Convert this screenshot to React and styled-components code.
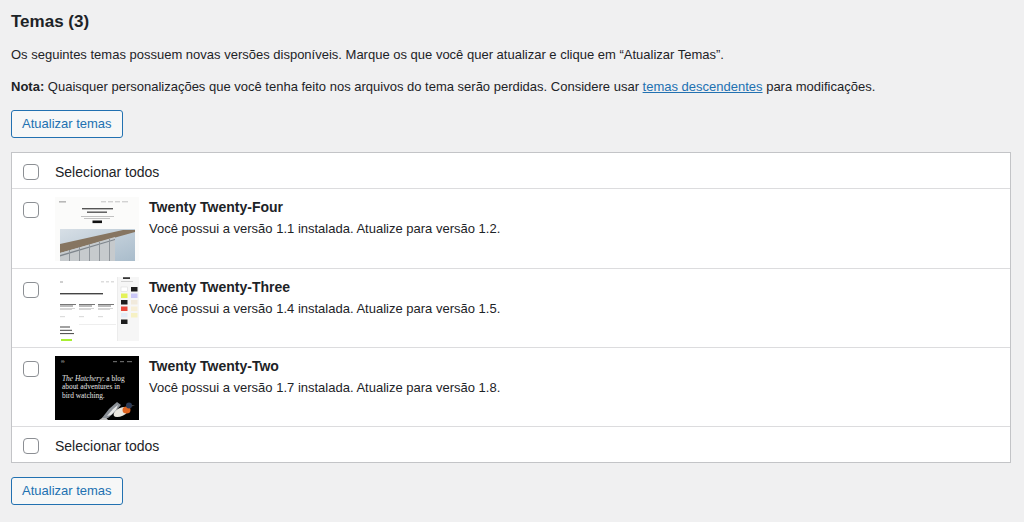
import React from 'react';
import styled, { createGlobalStyle } from 'styled-components';

const GlobalStyle = createGlobalStyle`
	body {
		margin: 0;
		background: #f0f0f1;
		color: #1d2327;
		font-family: "Liberation Sans", Arial, sans-serif;
		font-size: 13px;
	}
`;

const Page = styled.div`
	padding: 11px 13px 14px 11px;
`;

const Title = styled.h2`
	margin: 0 0 1px;
	font-size: 17px;
	line-height: 22px;
	font-weight: 700;
`;

const Text = styled.p`
	margin: 12px 0 0;
	line-height: 20px;
	& a {
		color: #2271b1;
		text-decoration: underline;
	}
`;

const Button = styled.button`
	display: block;
	margin-top: ${(props) => props.mt || 13}px;
	height: 28px;
	padding: 0 10px;
	border: 1px solid #2271b1;
	border-radius: 3px;
	background: #f6f7f7;
	color: #2271b1;
	font-family: inherit;
	font-size: 13px;
	line-height: 26px;
	cursor: pointer;
`;

const Table = styled.div`
	margin-top: 14px;
	background: #fff;
	border: 1px solid #c3c4c7;
`;

const SelectRow = styled.label`
	display: flex;
	align-items: center;
	box-sizing: border-box;
	height: 36px;
	padding: 3px 0 0 11px;
	font-size: 14px;
	border-top: ${(props) => (props.bordered ? '1px solid #dcdcde' : 'none')};
	border-bottom: ${(props) => (props.head ? '1px solid #dcdcde' : 'none')};
`;

const ThemeRow = styled.div`
	display: flex;
	align-items: flex-start;
	box-sizing: border-box;
	height: 79px;
	padding: 8px 0 6px 11px;
	& + & {
		border-top: 1px solid #dcdcde;
	}
`;

const Check = styled.input.attrs({ type: 'checkbox' })`
	appearance: none;
	flex-shrink: 0;
	width: 16px;
	height: 16px;
	margin: ${(props) => (props.top ? '5px' : '0')} 16px 0 0;
	border: 1px solid #8c8f94;
	border-radius: 4px;
	background: #fff;
`;

const Thumb = styled.svg`
	display: block;
	flex-shrink: 0;
	width: 84px;
	height: 64px;
	margin-right: 10px;
`;

const Info = styled.div`
	display: flex;
	flex-direction: column;
`;

const Name = styled.strong`
	font-size: 14px;
	line-height: 20px;
	font-weight: 700;
`;

const Desc = styled.span`
	margin-top: 2px;
	line-height: 20px;
`;

const ThumbFour = () => (
	<Thumb viewBox="0 0 84 64">
		<defs>
			<linearGradient id="sky" x1="0" y1="0" x2="1" y2="1">
				<stop offset="0" stopColor="#d7dfe6" />
				<stop offset="1" stopColor="#a9bccb" />
			</linearGradient>
		</defs>
		<rect width="84" height="64" fill="#fbfbfa" />
		<rect x="4" y="4.5" width="7" height="0.8" fill="#777" />
		<rect x="46" y="4.5" width="5" height="0.7" fill="#aaa" />
		<rect x="53" y="4.5" width="5" height="0.7" fill="#aaa" />
		<rect x="60" y="4.5" width="5" height="0.7" fill="#aaa" />
		<rect x="67" y="4.5" width="6" height="0.7" fill="#aaa" />
		<rect x="27" y="11" width="31" height="1.4" fill="#555" />
		<rect x="32" y="14.5" width="20" height="1.4" fill="#555" />
		<rect x="26" y="19" width="33" height="0.7" fill="#aaa" />
		<rect x="29" y="21" width="26" height="0.7" fill="#aaa" />
		<rect x="37.5" y="23.5" width="9.5" height="2.6" fill="#111" />
		<rect x="5" y="32" width="75" height="32" fill="url(#sky)" />
		<polygon points="5,47 68,33 80,33 80,35 5,56" fill="#867561" />
		<polygon points="5,56 60,40 60,64 5,64" fill="#c6cacd" />
		<polygon points="5,58 60,42 60,43 5,59.5" fill="#7e858c" />
		<rect x="14" y="53" width="1" height="11" fill="#8f959b" />
		<rect x="24" y="50" width="1" height="14" fill="#8f959b" />
		<rect x="34" y="47" width="1" height="17" fill="#8f959b" />
		<rect x="44" y="45" width="1" height="19" fill="#8f959b" />
		<rect x="54" y="42" width="1" height="22" fill="#8f959b" />
	</Thumb>
);

const swatches = [
	['#ffffff', '#1d1d1d'],
	['#e4f25a', '#cbc8f7'],
	['#1d1d1d', '#f1eadc'],
	['#e8473a', '#f7efd8'],
	['#e3ecf7', '#f6f1c4'],
	['#1d1d1d', null],
];

const ThumbThree = () => (
	<Thumb viewBox="0 0 84 64">
		<rect width="84" height="64" fill="#ffffff" />
		<rect x="5" y="4.6" width="3" height="0.8" fill="#888" />
		<rect x="46" y="4.6" width="3" height="0.6" fill="#aaa" />
		<rect x="51" y="4.6" width="3" height="0.6" fill="#aaa" />
		<rect x="56" y="4.6" width="3" height="0.6" fill="#aaa" />
		<rect x="5" y="16" width="43" height="1.4" fill="#444" />
		{[5, 24, 43].map((x) => (
			<g key={x}>
				<rect x={x} y="27" width="16" height="0.8" fill="#555" />
				<rect x={x} y="28.6" width="13" height="0.8" fill="#555" />
				<rect x={x} y="31" width="15" height="0.6" fill="#bbb" />
				<rect x={x} y="32.4" width="12" height="0.6" fill="#bbb" />
				<rect x={x} y="39.5" width="5" height="0.6" fill="#bbb" />
			</g>
		))}
		<rect x="24" y="47.5" width="37" height="0.5" fill="#ddd" />
		<rect x="5" y="49.5" width="10" height="1" fill="#444" />
		<rect x="5" y="52.8" width="12" height="1" fill="#444" />
		<rect x="5" y="56.1" width="14" height="1" fill="#444" />
		<rect x="6" y="62" width="11" height="2" fill="#a8ef32" />
		<rect x="62" y="0" width="22" height="64" fill="#f6f6f6" />
		<rect x="62" y="0" width="0.5" height="64" fill="#e2e2e2" />
		<rect x="68" y="0.3" width="7" height="1.6" fill="#222" />
		<rect x="66" y="4.4" width="12" height="0.6" fill="#bbb" />
		{swatches.map((pair, i) =>
			pair.map((c, j) =>
				c ? (
					<rect
						key={`${i}-${j}`}
						x={66 + j * 10}
						y={10 + i * 6.5}
						width="6.5"
						height="4.5"
						fill={c}
						stroke={c === '#ffffff' ? '#ccc' : 'none'}
						strokeWidth="0.4"
					/>
				) : null
			)
		)}
	</Thumb>
);

const ThumbTwo = () => (
	<Thumb viewBox="0 0 84 64">
		<rect width="84" height="64" fill="#000" />
		<text x="6" y="7" fontSize="5" fill="#ddd" fontFamily="Liberation Sans, sans-serif">
			∞
		</text>
		<rect x="58" y="5.5" width="4" height="0.6" fill="#ccc" />
		<rect x="65" y="5.5" width="4" height="0.6" fill="#ccc" />
		<rect x="72" y="5.5" width="5" height="0.6" fill="#ccc" />
		<g fontFamily="Liberation Serif, serif" fontSize="7.4" fill="#e4e4e4">
			<text x="7" y="24.5">
				<tspan fontStyle="italic">The Hatchery</tspan>: a blog
			</text>
			<text x="7" y="33">about adventures in</text>
			<text x="7" y="41.5">bird watching.</text>
		</g>
		<polygon points="44,64 50,60 53,64" fill="#bdbdbd" />
		<polygon points="47,62 54,53 62,46 66,49 60,56 53,62" fill="#8b9097" />
		<polygon points="52,60 58,53 63,49 61,54 56,59" fill="#e6e6e6" />
		<ellipse cx="66" cy="56" rx="8" ry="4" transform="rotate(-25 66 56)" fill="#e9e6df" />
		<ellipse cx="71.5" cy="54" rx="4" ry="3.6" fill="#df6420" />
		<circle cx="74" cy="49.5" r="3" fill="#2c3a56" />
		<polygon points="76.5,49 80,49.5 76.5,50.5" fill="#444" />
	</Thumb>
);

const themes = [
	{ name: 'Twenty Twenty-Four', from: '1.1', to: '1.2', Img: ThumbFour },
	{ name: 'Twenty Twenty-Three', from: '1.4', to: '1.5', Img: ThumbThree },
	{ name: 'Twenty Twenty-Two', from: '1.7', to: '1.8', Img: ThumbTwo },
];

const App = () => (
	<Page>
		<GlobalStyle />
		<Title>Temas (3)</Title>
		<Text>
			Os seguintes temas possuem novas versões disponíveis. Marque os que você quer atualizar e clique em
			“Atualizar Temas”.
		</Text>
		<Text>
			<strong>Nota:</strong> Quaisquer personalizações que você tenha feito nos arquivos do tema serão perdidas.
			Considere usar <a href="#">temas descendentes</a> para modificações.
		</Text>
		<Button>Atualizar temas</Button>
		<Table>
			<SelectRow head>
				<Check />
				Selecionar todos
			</SelectRow>
			<div>
				{themes.map(({ name, from, to, Img }) => (
					<ThemeRow key={name}>
						<Check top />
						<Img />
						<Info>
							<Name>{name}</Name>
							<Desc>
								Você possui a versão {from} instalada. Atualize para versão {to}.
							</Desc>
						</Info>
					</ThemeRow>
				))}
			</div>
			<SelectRow bordered>
				<Check />
				Selecionar todos
			</SelectRow>
		</Table>
		<Button mt={14}>Atualizar temas</Button>
	</Page>
);

export default App;
